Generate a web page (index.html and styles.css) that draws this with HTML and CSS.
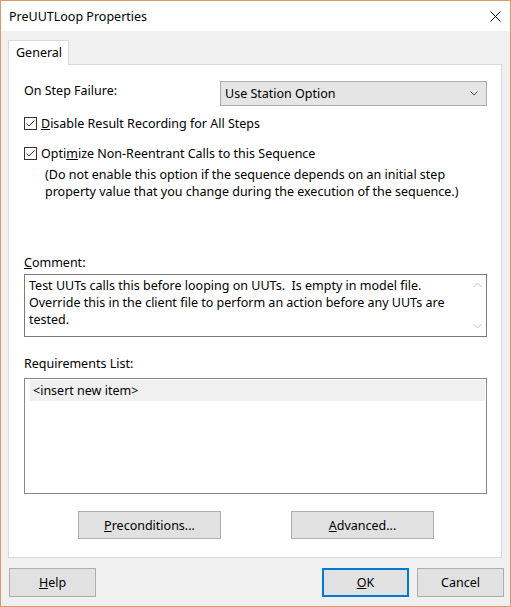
FILE: index.html
```html
<!DOCTYPE html>
<html>
<head>
<meta charset="utf-8">
<link rel="stylesheet" href="styles.css">
</head>
<body>
<div class="window">
  <div class="titlebar">
    <span class="title">PreUUTLoop Properties</span>
    <svg class="close" width="11" height="11" viewBox="0 0 11 11"><path d="M0.5 0.5 L10.5 10.5 M10.5 0.5 L0.5 10.5" stroke="#000" stroke-width="1" fill="none"/></svg>
  </div>
  <div class="tabs">
    <div class="tab">General</div>
  </div>
  <div class="panel">
    <div class="row-fail">
      <span class="label-fail">On Step Failure:</span>
      <div class="select">
        <span>Use Station Option</span>
        <svg width="8" height="5" viewBox="0 0 8 5"><path d="M0.5 0.5 L4 4 L7.5 0.5" stroke="#505050" stroke-width="1" fill="none"/></svg>
      </div>
    </div>
    <div class="check-row first">
      <svg class="cb" width="13" height="13" viewBox="0 0 13 13"><rect x="0.5" y="0.5" width="12" height="12" fill="#fff" stroke="#333"/><path d="M2.5 6.5 L5 9 L10.5 3.5" stroke="#333" stroke-width="1" fill="none"/></svg>
      <span><u>D</u>isable Result Recording for All Steps</span>
    </div>
    <div class="check-row second">
      <svg class="cb" width="13" height="13" viewBox="0 0 13 13"><rect x="0.5" y="0.5" width="12" height="12" fill="#fff" stroke="#333"/><path d="M2.5 6.5 L5 9 L10.5 3.5" stroke="#333" stroke-width="1" fill="none"/></svg>
      <span>Opti<u>m</u>ize Non-Reentrant Calls to this Sequence</span>
    </div>
    <div class="note">(Do not enable this option if the sequence depends on an initial step<br>property value that you change during the execution of the sequence.)</div>
    <div class="field-label comment-label"><u>C</u>omment:</div>
    <div class="comment-box">
      <div class="comment-text">Test UUTs calls this before looping on UUTs.&nbsp; Is empty in model file. Override this in the client file to perform an action before any UUTs are tested.</div>
      <div class="scrollbar">
        <svg width="9" height="6" viewBox="0 0 9 6"><path d="M0.5 5 L4.5 1 L8.5 5" stroke="#c2c2c2" stroke-width="1" fill="none"/></svg>
        <svg width="9" height="6" viewBox="0 0 9 6"><path d="M0.5 1 L4.5 5 L8.5 1" stroke="#c2c2c2" stroke-width="1" fill="none"/></svg>
      </div>
    </div>
    <div class="field-label req-label">Requirements List:</div>
    <div class="list-box">
      <div class="list-item">&lt;insert new item&gt;</div>
    </div>
    <div class="panel-buttons">
      <div class="btn wide"><u>P</u>reconditions...</div>
      <div class="btn wide"><u>A</u>dvanced...</div>
    </div>
  </div>
  <div class="footer">
    <div class="btn"><u>H</u>elp</div>
    <div class="spacer"></div>
    <div class="btn default"><u>O</u>K</div>
    <div class="btn">Cancel</div>
  </div>
</div>
</body>
</html>
```
FILE: styles.css
```css
* { box-sizing: border-box; }
html, body { margin: 0; padding: 0; }
body {
  font-family: "Noto Sans", "Open Sans", sans-serif;
  font-size: 12.5px;
  color: #000;
  background: #f0f0f0;
}
.window {
  width: 511px;
  height: 607px;
  border: 1px solid #da9a68;
  background: #f0f0f0;
  display: flex;
  flex-direction: column;
}
.titlebar {
  height: 30px;
  background: #fff;
  display: flex;
  align-items: center;
  padding: 0 9px 0 8px;
}
.title { font-size: 12.5px; }
.close { margin-left: auto; margin-top: 1px; }
.tabs {
  padding: 9px 0 0 7px;
  display: flex;
}
.tab {
  position: relative;
  z-index: 1;
  width: 61px;
  height: 25px;
  margin-bottom: -1px;
  background: #fff;
  border: 1px solid #d9d9d9;
  border-bottom: none;
  padding-left: 7px;
  line-height: 23px;
}
.panel {
  margin: 0 8px 0 7px;
  height: 494px;
  background: #fff;
  border: 1px solid #d9d9d9;
  padding: 16px 14px 0 15px;
  display: flex;
  flex-direction: column;
}
.row-fail {
  display: flex;
  align-items: flex-start;
  height: 25px;
}
.label-fail {
  width: 196px;
  line-height: 17px;
  margin-top: 1px;
}
.select {
  flex: 1;
  height: 25px;
  background: #e5e5e5;
  border: 1px solid #acacac;
  display: flex;
  align-items: center;
  padding: 0 8px 0 4px;
  justify-content: space-between;
}
.check-row {
  display: flex;
  align-items: center;
  height: 17px;
  gap: 4px;
}
.check-row.first { margin-top: 9px; }
.check-row.second { margin-top: 13px; }
.cb { flex: none; }
.note {
  margin-top: 4px;
  padding-left: 21px;
  line-height: 17px;
}
.field-label { line-height: 17px; }
.comment-label { margin-top: 54px; }
.comment-box {
  margin-top: 3px;
  height: 63px;
  border: 1px solid #7a7a7a;
  display: flex;
}
.comment-text {
  flex: 1;
  padding: 2px 4px 0 4px;
  line-height: 17px;
}
.scrollbar {
  width: 17px;
  flex: none;
  display: flex;
  flex-direction: column;
  justify-content: space-between;
  align-items: center;
  padding: 7px 0 7px 0;
}
.req-label { margin-top: 18px; }
.list-box {
  margin-top: 6px;
  height: 116px;
  border: 1px solid #828790;
  padding: 1px 1px 0 5px;
}
.list-item {
  height: 21px;
  line-height: 21px;
  background: #f0f0f0;
  padding-left: 3px;
}
.panel-buttons {
  margin-top: 17px;
  padding-left: 54px;
  display: flex;
  gap: 70px;
}
.btn {
  width: 87px;
  height: 29px;
  background: #e1e1e1;
  border: 1px solid #adadad;
  display: flex;
  align-items: center;
  justify-content: center;
}
.btn.wide {
  width: 143px;
  height: 28px;
}
.btn.default {
  border: 2px solid #0078d7;
}
.footer {
  margin-top: 10px;
  display: flex;
  gap: 8px;
  padding: 0 6px 0 8px;
}
.spacer { flex: 1; }
```
